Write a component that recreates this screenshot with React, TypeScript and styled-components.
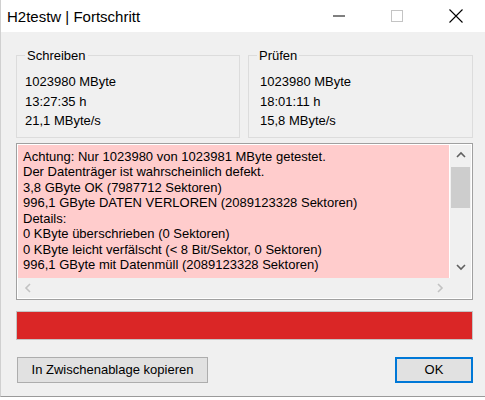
import React from "react";
import styled, { createGlobalStyle } from "styled-components";

const GlobalStyle = createGlobalStyle`
  html, body { margin: 0; padding: 0; background: #ffffff; }
  body { font-family: "Liberation Sans", Arial, sans-serif; color: #000; }
  * { box-sizing: border-box; }
`;

const Window = styled.div`
  width: 485px;
  height: 397px;
  background: #f0f0f0;
  border-left: 1px solid #d0d0d0;
  border-bottom: 1px solid #9a9a9a;
  display: flex;
  flex-direction: column;
  overflow: hidden;
`;

const TitleBar = styled.div`
  height: 32px;
  flex: none;
  background: #ffffff;
  display: flex;
  align-items: center;
`;

const Title = styled.div`
  flex: 1;
  padding-left: 6px;
  font-size: 15px;
  color: #000;
`;

const Controls = styled.div`
  display: flex;
  height: 100%;
`;

const CtrlButton = styled.div`
  width: 58.5px;
  height: 100%;
  display: flex;
  align-items: center;
  justify-content: center;
`;

const Content = styled.div`
  padding: 16px 12px 0 15px;
  display: flex;
  flex-direction: column;
`;

const GroupRow = styled.div`
  display: grid;
  grid-template-columns: 224px 225px;
  column-gap: 8px;
`;

const Group = styled.fieldset`
  margin: 0;
  min-width: 0;
  padding: 9px 8px 6px 8px;
  border: 1px solid #dcdcdc;
`;

const Legend = styled.legend`
  padding: 0 2px;
  font-size: 13px;
  line-height: 15px;
`;

const Lines = styled.div<{ $indent: number }>`
  padding-left: ${(p) => p.$indent}px;
  font-size: 13px;
  line-height: 19.5px;
`;

const LogBox = styled.div`
  margin-top: 5px;
  height: 157px;
  border: 1px solid #a0a0a0;
  padding: 1px;
  background: #ffffff;
  display: grid;
  grid-template-columns: 1fr 21px;
  grid-template-rows: 1fr 20px;
`;

const LogText = styled.div`
  background: #ffcccc;
  margin-right: 1px;
  padding: 4px 0 0 5px;
  font-size: 13px;
  line-height: 15.5px;
  white-space: pre;
  overflow: hidden;
`;

const VScroll = styled.div`
  background: #f0f0f0;
  display: flex;
  flex-direction: column;
`;

const HScroll = styled.div`
  background: #f0f0f0;
  display: flex;
  justify-content: space-between;
`;

const Corner = styled.div`
  background: #f0f0f0;
`;

const ArrowBox = styled.div<{ $w: number; $h: number }>`
  width: ${(p) => p.$w}px;
  height: ${(p) => p.$h}px;
  flex: none;
  display: flex;
  align-items: center;
  justify-content: center;
`;

const Track = styled.div`
  flex: 1;
  padding: 1px 1px 0 1px;
`;

const Thumb = styled.div`
  height: 41px;
  background: #cdcdcd;
`;

const Progress = styled.div`
  margin-top: 11px;
  height: 29px;
  border: 1px solid #c4c4c4;
  background: #e6e6e6;
  display: flex;
`;

const ProgressFill = styled.div`
  background: #da2626;
  height: 100%;
`;

const ButtonRow = styled.div`
  margin-top: 17px;
  display: flex;
  justify-content: space-between;
  padding-left: 1px;
`;

const Button = styled.button<{ $primary?: boolean; $w: number }>`
  width: ${(p) => p.$w}px;
  height: 26px;
  margin: 0;
  padding: 0;
  font-family: "Liberation Sans", Arial, sans-serif;
  font-size: 13px;
  color: #000;
  background: #e1e1e1;
  border: ${(p) => (p.$primary ? "2px solid #0078d7" : "1px solid #adadad")};
`;

const Chevron = ({ dir, color }: { dir: "up" | "down" | "left" | "right"; color: string }) => {
  const paths: Record<string, string> = {
    up: "M1 6 L5 2 L9 6",
    down: "M1 2 L5 6 L9 2",
    left: "M6 1 L2 5 L6 9",
    right: "M2 1 L6 5 L2 9",
  };
  const horiz = dir === "up" || dir === "down";
  return (
    <svg width={horiz ? 10 : 8} height={horiz ? 8 : 10} viewBox={horiz ? "0 0 10 8" : "0 0 8 10"}>
      <path d={paths[dir]} fill="none" stroke={color} strokeWidth="1.6" />
    </svg>
  );
};

const logLines = [
  "Achtung: Nur 1023980 von 1023981 MByte getestet.",
  "Der Datenträger ist wahrscheinlich defekt.",
  "3,8 GByte OK (7987712 Sektoren)",
  "996,1 GByte DATEN VERLOREN (2089123328 Sektoren)",
  "Details:",
  "0 KByte überschrieben (0 Sektoren)",
  "0 KByte leicht verfälscht (< 8 Bit/Sektor, 0 Sektoren)",
  "996,1 GByte mit Datenmüll (2089123328 Sektoren)",
];

export default function App() {
  return (
    <>
      <GlobalStyle />
      <Window>
        <TitleBar>
          <Title>H2testw | Fortschritt</Title>
          <Controls>
            <CtrlButton>
              <svg width="12" height="2" viewBox="0 0 12 2">
                <line x1="0" y1="1" x2="12" y2="1" stroke="#000" strokeWidth="1" />
              </svg>
            </CtrlButton>
            <CtrlButton>
              <svg width="12" height="12" viewBox="0 0 12 12">
                <rect x="0.5" y="0.5" width="11" height="11" fill="none" stroke="#c4c4c4" strokeWidth="1" />
              </svg>
            </CtrlButton>
            <CtrlButton>
              <svg width="14" height="14" viewBox="0 0 14 14">
                <path d="M0.5 0.5 L13.5 13.5 M13.5 0.5 L0.5 13.5" stroke="#000" strokeWidth="1.1" />
              </svg>
            </CtrlButton>
          </Controls>
        </TitleBar>
        <Content>
          <GroupRow>
            <Group>
              <Legend>Schreiben</Legend>
              <Lines $indent={0}>
                <div>1023980 MByte</div>
                <div>13:27:35 h</div>
                <div>21,1 MByte/s</div>
              </Lines>
            </Group>
            <Group>
              <Legend>Prüfen</Legend>
              <Lines $indent={3}>
                <div>1023980 MByte</div>
                <div>18:01:11 h</div>
                <div>15,8 MByte/s</div>
              </Lines>
            </Group>
          </GroupRow>
          <LogBox>
            <LogText>{logLines.join("\n")}</LogText>
            <VScroll>
              <ArrowBox $w={21} $h={21}>
                <Chevron dir="up" color="#606060" />
              </ArrowBox>
              <Track>
                <Thumb />
              </Track>
              <ArrowBox $w={21} $h={21}>
                <Chevron dir="down" color="#606060" />
              </ArrowBox>
            </VScroll>
            <HScroll>
              <ArrowBox $w={20} $h={20}>
                <Chevron dir="left" color="#c2c2c2" />
              </ArrowBox>
              <ArrowBox $w={20} $h={20}>
                <Chevron dir="right" color="#c2c2c2" />
              </ArrowBox>
            </HScroll>
            <Corner />
          </LogBox>
          <Progress>
            <ProgressFill style={{ width: "100%" }} />
          </Progress>
          <ButtonRow>
            <Button $w={191}>In Zwischenablage kopieren</Button>
            <Button $w={78} $primary>
              OK
            </Button>
          </ButtonRow>
        </Content>
      </Window>
    </>
  );
}
